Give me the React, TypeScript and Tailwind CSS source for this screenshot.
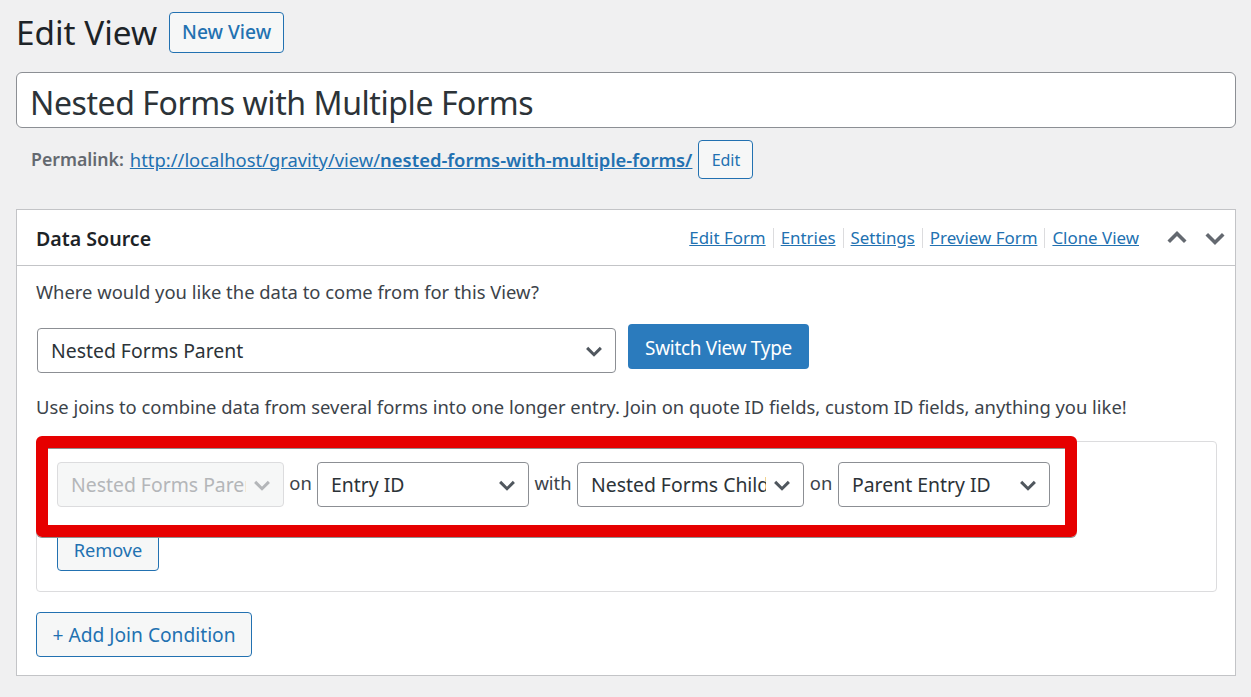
const chevron = (cls: string) => (
  <svg viewBox="0 0 16 16" className={cls} fill="none" stroke="currentColor" strokeWidth="2.4">
    <path d="M2.5 5.5 8 11l5.5-5.5" />
  </svg>
);

function Select({ label, w, disabled }: { label: string; w: string; disabled?: boolean }) {
  return (
    <div
      className={`${w} h-[45px] shrink-0 flex items-center rounded-[4px] border pl-[13px] text-[19.4px] ${
        disabled ? "border-[#dcdcde] bg-[#f6f7f7] text-[#b4b6b9]" : "border-[#8c8f94] bg-white text-[#2c3338]"
      }`}
    >
      <span className="flex-1 overflow-hidden whitespace-nowrap pt-[1px]">{label}</span>
      <span className={`w-[37px] shrink-0 flex justify-start pl-[6px] ${disabled ? "text-[#b4b6b9]" : "text-[#50575e]"}`}>
        {chevron("w-[20px] h-[20px]")}
      </span>
    </div>
  );
}

function OutlineButton({ children, className }: { children: React.ReactNode; className: string }) {
  return (
    <button className={`rounded-[4px] border border-[#2271b1] bg-[#f6f7f7] text-[#2271b1] flex items-center justify-center ${className}`}>
      {children}
    </button>
  );
}

const links = ["Edit Form", "Entries", "Settings", "Preview Form", "Clone View"];

export default function App() {
  return (
    <div className="relative h-[697px] overflow-hidden bg-[#f0f0f1] pl-[16px] pr-[15px] text-[#3c434a] font-['Noto_Sans','Open_Sans',sans-serif] text-[18.4px]">
      <div className="flex items-center pt-[12px]">
        <h1 className="text-[33.3px] leading-[41px] text-[#1d2327]">Edit View</h1>
        <OutlineButton className="ml-[12px] w-[115px] h-[41px] text-[19.2px] font-medium">New View</OutlineButton>
      </div>

      <div className="mt-[19px] h-[56px] flex items-center rounded-[6px] border border-[#8c8f94] bg-white pl-[13px] pt-[5px] text-[32px] tracking-[-0.42px] text-[#2c3338]">
        Nested Forms with Multiple Forms
      </div>

      <div className="mt-[12px] h-[39px] flex items-center pl-[15px] text-[#646970]">
        <strong className="font-semibold text-[17.7px] mr-[6px]">Permalink:</strong>
        <a className="text-[#2271b1] underline">
          http://localhost/gravity/view/<b className="font-semibold">nested-forms-with-multiple-forms/</b>
        </a>
        <OutlineButton className="ml-[6px] w-[55px] h-[39px] text-[16px]">Edit</OutlineButton>
      </div>

      <section className="mt-[30px] h-[467px] border border-[#c3c4c7] bg-white">
        <header className="h-[56px] flex items-center border-b border-[#c3c4c7] pl-[19px] pr-[8px]">
          <h2 className="text-[19.6px] pt-[2px] font-semibold text-[#1d2327]">Data Source</h2>
          <div className="ml-auto flex items-center pt-[1px] text-[16.9px]">
            {links.map((l, i) => (
              <span key={l} className="flex items-center">
                {i > 0 && <span className="mx-[7px] h-[20px] w-px bg-[#dcdcde]" />}
                <a className="text-[#2271b1] underline">{l}</a>
              </span>
            ))}
          </div>
          <div className="ml-[26px] flex gap-[14px] pt-[1px] text-[#646970]">
            {chevron("w-[24px] h-[24px] rotate-180")}
            {chevron("w-[24px] h-[24px]")}
          </div>
        </header>

        <div className="pl-[19px] pr-[18px]">
          <p className="mt-[12px] leading-[28px]">Where would you like the data to come from for this View?</p>
          <div className="mt-[18px] flex items-start pl-[1px]">
            <div className="mt-[4px]">
              <Select label="Nested Forms Parent" w="w-[579px]" />
            </div>
            <button className="ml-[12px] w-[181px] h-[45px] rounded-[4px] bg-[#2b7bbd] pt-[3px] text-[19px] tracking-[-0.3px] text-white">Switch View Type</button>
          </div>
          <p className="mt-[20px] leading-[28px]">
            Use joins to combine data from several forms into one longer entry. Join on quote ID fields, custom ID fields, anything you like!
          </p>

          <div className="mt-[20px] h-[151px] rounded-[4px] border border-[#dcdcde] pl-[20px] pt-[20px]">
            <div className="flex items-start">
              <Select label="Nested Forms Parent" w="w-[227px]" disabled />
              <span className="mx-[5px] w-[23px] text-center leading-[42px]">on</span>
              <Select label="Entry ID" w="w-[212px]" />
              <span className="mx-[5px] w-[38px] text-center leading-[42px]">with</span>
              <Select label="Nested Forms Child" w="w-[227px]" />
              <span className="mx-[5px] w-[24px] text-center leading-[42px]">on</span>
              <Select label="Parent Entry ID" w="w-[212px]" />
            </div>
            <OutlineButton className="mt-[23px] w-[102px] h-[41px] text-[18.2px]">Remove</OutlineButton>
          </div>

          <OutlineButton className="mt-[20px] w-[216px] h-[45px] pt-[1px] text-[19.2px]">+ Add Join Condition</OutlineButton>
        </div>
      </section>

      {/* highlight drawn on top of the join row */}
      <div className="absolute left-[36px] top-[436px] w-[1041px] h-[101px] rounded-[6px] border-[12px] border-[#e60000] shadow-[inset_0_1px_0_#8f8f8f,0_1px_0_#8f8f8f]" />
    </div>
  );
}
